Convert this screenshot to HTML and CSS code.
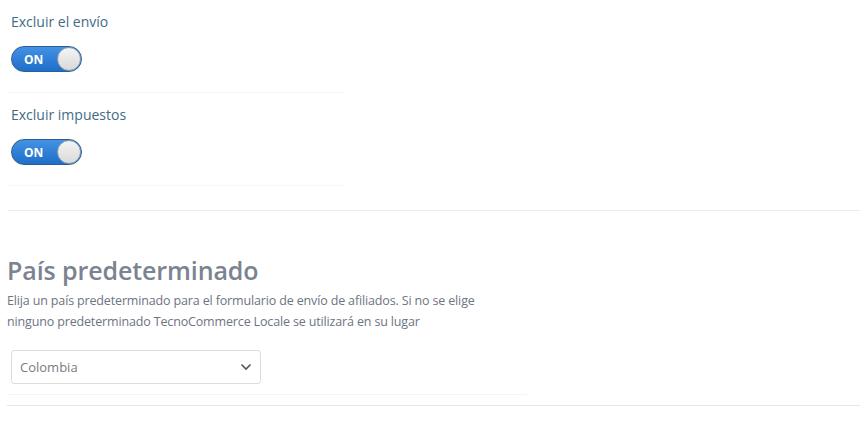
FILE: index.html
```
<!DOCTYPE html>
<html lang="es">
<head>
    <meta charset="UTF-8">
    <meta name="viewport" content="width=device-width, initial-scale=1">
    <title>Ajustes de afiliados</title>
    <link rel="stylesheet" href="styles.css">
</head>
<body>
    <div class="toggles">
        <div class="field">
            <label class="field-label">Excluir el envío</label>
            <div class="switch">
                <span class="switch-text">ON</span>
                <span class="switch-knob"></span>
            </div>
        </div>
        <div class="field">
            <label class="field-label">Excluir impuestos</label>
            <div class="switch">
                <span class="switch-text">ON</span>
                <span class="switch-knob"></span>
            </div>
        </div>
    </div>

    <div class="section">
        <h2>País predeterminado</h2>
        <p class="help">Elija un país predeterminado para el formulario de envío de afiliados. Si no se elige ninguno predeterminado TecnoCommerce Locale se utilizará en su lugar</p>
        <div class="select-row">
            <div class="select">
                <span>Colombia</span>
                <svg width="12" height="8" viewBox="0 0 12 8"><path d="M1.5 1.5 L6 6 L10.5 1.5" fill="none" stroke="#555" stroke-width="1.6"/></svg>
            </div>
        </div>
    </div>
</body>
</html>
```
FILE: styles.css
```
body {
    margin: 0;
    font-family: "Open Sans", Arial, sans-serif;
    background-color: #fff;
}
.toggles {
    margin-left: 8px;
    padding-bottom: 24px;
    border-bottom: 1px solid #ebebeb;
}
.field {
    width: 333px;
    padding: 12px 0 20px 3px;
    border-bottom: 1px solid #f6f6f6;
}
.field-label {
    display: block;
    font-size: 14px;
    line-height: 20px;
    color: #3f6c86;
}
.switch {
    margin-top: 14px;
    width: 69px;
    height: 24px;
    border: 1px solid #2b5e96;
    border-radius: 13px;
    background: linear-gradient(#4392e3, #1f6ec9);
    display: flex;
    align-items: center;
    justify-content: space-between;
    box-sizing: content-box;
}
.switch-text {
    color: #fff;
    font-weight: 700;
    font-size: 12px;
    padding-left: 12px;
}
.switch-knob {
    width: 22px;
    height: 22px;
    border-radius: 50%;
    background: linear-gradient(#f4f4f4, #d9d9d9);
    border: 1px solid #8a9bb0;
}
.section {
    padding: 42px 0 0 7px;
}
.section h2 {
    margin: 0;
    font-size: 25px;
    line-height: 34px;
    font-weight: 600;
    color: #7b8391;
    letter-spacing: -0.1px;
}
.help {
    margin: 3px 0 0;
    width: 490px;
    font-size: 12.5px;
    line-height: 21px;
    color: #6d7482;
    letter-spacing: -0.15px;
}
.select-row {
    width: 516px;
    padding: 18px 0 10px 4px;
    border-bottom: 1px solid #f5f5f5;
}
.select {
    width: 232px;
    height: 32px;
    border: 1px solid #ddd;
    border-radius: 3px;
    display: flex;
    align-items: center;
    justify-content: space-between;
    padding: 0 8px;
    box-sizing: content-box;
    font-size: 13px;
    color: #777b82;
}
.section::after {
    content: "";
    display: block;
    margin-top: 10px;
    border-top: 1px solid #e6e6e6;
}
```
